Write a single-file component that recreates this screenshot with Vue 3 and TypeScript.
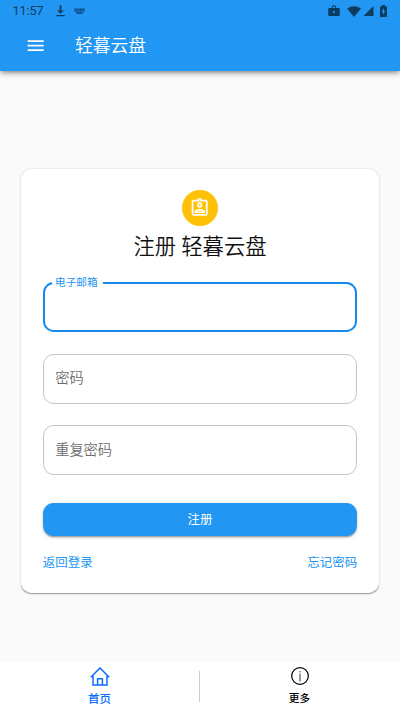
<script setup lang="ts">
import { ref } from 'vue'

const email = ref('')
const password = ref('')
const repeat = ref('')
</script>

<template>
  <div class="page">
    <header class="header">
      <div class="status">
        <span class="clock">11:57</span>
        <svg class="download" viewBox="0 0 10 13"><path d="M4 0.5h2V6h2.8L5 9.6 1.2 6H4zM.3 11h9.4v1.4H.3z" /></svg>
        <svg class="keyboard" viewBox="0 0 12 7">
          <path d="M.5 1h11M.5 3h11" stroke-dasharray="1.5 .4" />
          <path d="M2.5 5.2h7" />
        </svg>
        <span class="grow"></span>
        <svg class="case" viewBox="0 0 12 12"><path fill-rule="evenodd" d="M1 3h2.7V1.5L5 .3h2l1.3 1.2V3H11q1 0 1 1v6.5q0 1-1 1H1q-1 0-1-1V4q0-1 1-1zm3.8 0h2.4V1.5H4.8zM6 6a1.2 1.2 0 1 0 0 2.4A1.2 1.2 0 0 0 6 6z" /></svg>
        <svg class="wifi" viewBox="0 0 14 11"><path d="M0 2.5Q7-2.2 14 2.5L7 11z" /></svg>
        <svg class="signal" viewBox="0 0 10 10"><path d="M10 0v10H0z" /></svg>
        <svg class="battery" viewBox="0 0 7 12"><path fill-rule="evenodd" d="M2 0h3v1.2h1.2q.8 0 .8.8v9.2q0 .8-.8.8H.8q-.8 0-.8-.8V2q0-.8.8-.8H2zm2 3L1.7 7.2H3v2.6l2.3-4.1H4z" /></svg>
      </div>
      <div class="toolbar">
        <svg class="menu" viewBox="0 0 24 24"><path d="M3 18h18v-2H3v2zm0-5h18v-2H3v2zm0-7v2h18V6H3z" /></svg>
        <span class="brand">轻暮云盘</span>
      </div>
    </header>

    <main class="main">
      <form class="card" @submit.prevent>
        <div class="avatar">
          <svg viewBox="0 0 24 24">
            <path fill-rule="evenodd" d="M19 3h-4.2a3 3 0 0 0-5.6 0H5a2 2 0 0 0-2 2v14a2 2 0 0 0 2 2h14a2 2 0 0 0 2-2V5a2 2 0 0 0-2-2zm-7-.25a.75.75 0 1 1 0 1.5.75.75 0 0 1 0-1.5zM19 19H5V5h14v14z" />
            <path fill-rule="evenodd" d="M12 6a3 3 0 1 0 0 6 3 3 0 0 0 0-6zm0 1.8a1.2 1.2 0 1 1 0 2.4 1.2 1.2 0 0 1 0-2.4zM6 16.7V18h12v-1.3c0-2.2-3.97-3.2-6-3.2s-6 1-6 3.2zm2.5-.3c.8-.6 2.3-1 3.5-1s2.7.4 3.5 1z" />
          </svg>
        </div>
        <h1>注册 轻暮云盘</h1>
        <fieldset class="field focused">
          <legend>电子邮箱</legend>
          <input v-model="email" type="text" aria-label="电子邮箱" />
        </fieldset>
        <div class="field"><input v-model="password" type="password" placeholder="密码" /></div>
        <div class="field"><input v-model="repeat" type="password" placeholder="重复密码" /></div>
        <button class="submit" type="submit">注册</button>
        <div class="links"><a>返回登录</a><a>忘记密码</a></div>
      </form>
    </main>

    <nav class="tabs">
      <a class="tab active">
        <svg class="home" viewBox="0 0 20 19"><path d="M.8 10.3 10 1l9.2 9.3M3 9v9.1h14V9M7.6 18v-6.2h4.8V18" /></svg>
        <span>首页</span>
      </a>
      <span class="divider"></span>
      <a class="tab">
        <svg class="info" viewBox="0 0 18 18"><circle cx="9" cy="9" r="8.3" /><path class="mark" d="M9 4v1.4M9 6.7V14.5" /></svg>
        <span>更多</span>
      </a>
    </nav>
  </div>
</template>

<style>
body {
  background: #fafafa;
}
</style>

<style scoped>
* {
  box-sizing: border-box;
}
.page {
  display: flex;
  flex-direction: column;
  height: 711px;
  overflow: hidden;
  font-family: Roboto, "Noto Sans CJK SC", sans-serif;
}
.header {
  height: 71px;
  flex: none;
  background: #2196f3;
  box-shadow: 0 2px 4px -1px rgba(0, 0, 0, 0.3), 0 3px 5px rgba(0, 0, 0, 0.14), 0 1px 9px rgba(0, 0, 0, 0.12);
}
.status {
  display: flex;
  align-items: center;
  height: 21px;
  padding: 1px 13px 0 12.5px;
  fill: #0d3c61;
}
.clock {
  width: 43.5px;
  font-size: 12.5px;
  line-height: 20px;
  color: #0d3c61;
}
.download {
  width: 9px;
  height: 12px;
}
.keyboard {
  width: 11px;
  height: 7px;
  margin-left: 9px;
  fill: none;
  stroke: #0d4272;
  stroke-width: 1.6;
}
.grow {
  flex: 1;
}
.case {
  width: 12px;
  height: 11.5px;
  margin-right: 7px;
}
.wifi {
  width: 14px;
  height: 11px;
  margin-right: 2px;
}
.signal {
  width: 10.5px;
  height: 10.5px;
  margin-right: 6.5px;
}
.battery {
  width: 7px;
  height: 12px;
}
.toolbar {
  display: flex;
  align-items: center;
  height: 50px;
  padding-left: 24.7px;
}
.menu {
  width: 21.33px;
  height: 21.33px;
  fill: #fff;
}
.brand {
  margin-left: 29px;
  font-size: 17.78px;
  font-weight: 350;
  line-height: 28px;
  color: #fff;
}
.main {
  flex: 1;
  padding: 98px 21.33px 0;
}
.card {
  display: flex;
  flex-direction: column;
  align-items: center;
  height: 424.3px;
  padding: 21.2px 21.33px 0;
  border-radius: 10.67px;
  background: #fff;
  box-shadow: 0 1.8px 0.9px -0.9px rgba(0, 0, 0, 0.2), 0 0.9px 0.9px rgba(0, 0, 0, 0.14), 0 0.9px 2.7px rgba(0, 0, 0, 0.12);
}
.avatar {
  display: flex;
  align-items: center;
  justify-content: center;
  width: 35.6px;
  height: 35.6px;
  border-radius: 50%;
  background: #ffc107;
}
.avatar svg {
  width: 21.33px;
  height: 21.33px;
  fill: #fff;
}
h1 {
  margin: 7px 0 20.8px;
  font-size: 21.33px;
  font-weight: 350;
  line-height: 28.4px;
  color: #111;
}
.field {
  width: 100%;
  height: 49.8px;
  flex: none;
  margin: 0 0 21.6px;
  padding: 0 11.5px 1px;
  border: 1px solid #c4c4c4;
  border-radius: 10.67px;
}
.focused {
  height: 50.2px;
  padding: 0 7px;
  border: 2px solid #1788ee;
}
legend {
  height: 2px;
  padding: 0 5.5px 0 3.4px;
  font-size: 10.67px;
  line-height: 1px;
  color: #2196f3;
}
input {
  display: block;
  width: 100%;
  height: 100%;
  padding: 0;
  border: 0;
  outline: 0;
  background: transparent;
  font: 350 14.22px Roboto, "Noto Sans CJK SC", sans-serif;
}
input::placeholder {
  color: #6c6c6c;
  opacity: 1;
}
.submit {
  width: 100%;
  height: 32.6px;
  flex: none;
  margin-top: 6.7px;
  padding: 0;
  border: 0;
  border-radius: 10.67px;
  background: #2196f3;
  color: #fff;
  font: 400 12.44px/32px Roboto, "Noto Sans CJK SC", sans-serif;
  box-shadow: 0 2.7px 0.9px -1.8px rgba(0, 0, 0, 0.2), 0 1.8px 1.8px rgba(0, 0, 0, 0.14), 0 0.9px 4.4px rgba(0, 0, 0, 0.12);
}
.links {
  display: flex;
  justify-content: space-between;
  width: 100%;
  margin-top: 17px;
  font-size: 12.5px;
  line-height: 20px;
  color: #2196f3;
}
.tabs {
  display: flex;
  height: 49px;
  flex: none;
  padding-right: 1px;
  background: #fff;
}
.tab {
  display: flex;
  flex: 1;
  flex-direction: column;
  align-items: center;
  padding-top: 5px;
  font-size: 10.67px;
  font-weight: 500;
  line-height: 16px;
  color: #000;
}
.tab svg {
  flex: none;
  fill: none;
  stroke: currentColor;
}
.active {
  color: #0a6cff;
  font-size: 11.5px;
}
.home {
  width: 20px;
  height: 19px;
  margin-bottom: 5px;
  stroke-width: 1.5;
}
.info {
  width: 18px;
  height: 18px;
  margin-bottom: 6px;
  stroke-width: 1.2;
}
.mark {
  stroke: #555;
}
.divider {
  width: 1px;
  height: 31px;
  margin-top: 9px;
  background: #ccc;
}
</style>
